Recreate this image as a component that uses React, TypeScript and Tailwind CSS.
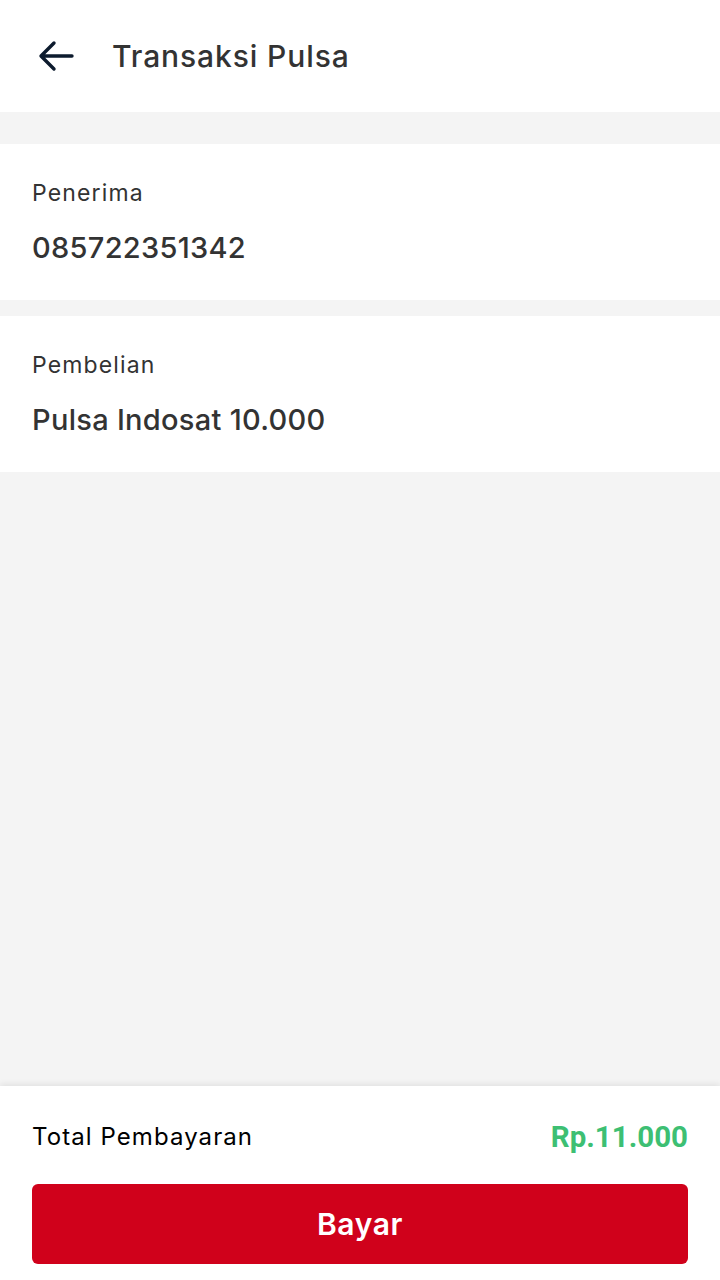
import React from "react";

const font = { fontFamily: "Inter, 'Noto Sans', sans-serif" };

const InfoCard: React.FC<{ label: string; value: string }> = ({ label, value }) => (
    <div className="bg-white px-8 h-[156px] flex flex-col justify-center">
        <p className="text-[23px] leading-none tracking-[0.05em] text-[#333333] mb-[28px]">{label}</p>
        <p className="text-[29px] leading-none font-medium tracking-[0.01em] text-[#333333]">{value}</p>
    </div>
);

export default function App() {
    return (
        <div className="w-[720px] h-[1280px] bg-[#f4f4f4] flex flex-col" style={font}>
            <header className="bg-white h-[112px] flex items-center shrink-0">
                <button className="ml-[38px] w-9 h-9 flex items-center justify-center">
                    <svg width="36" height="32" viewBox="0 0 36 32" fill="none">
                        <path
                            d="M34 16H4M16 3L3 16l13 13"
                            stroke="#0d1b2e"
                            strokeWidth="3.4"
                            strokeLinecap="round"
                            strokeLinejoin="round"
                        />
                    </svg>
                </button>
                <h1 className="ml-[38px] text-[30px] font-medium tracking-[0.03em] text-[#333333]">Transaksi Pulsa</h1>
            </header>

            <div className="mt-8 flex flex-col gap-4">
                <InfoCard label="Penerima" value="085722351342" />
                <InfoCard label="Pembelian" value="Pulsa Indosat 10.000" />
            </div>

            <div className="flex-1" />

            <footer className="bg-white h-[194px] px-8 pt-[34px] shadow-[0_-2px_6px_rgba(0,0,0,0.08)] shrink-0">
                <div className="flex items-center justify-between h-[34px]">
                    <span className="text-[24px] tracking-[0.045em] text-black">Total Pembayaran</span>
                    <span
                        className="text-[29.5px] font-bold text-[#3dbf73]"
                        style={{ fontFamily: "Roboto, sans-serif" }}
                    >
                        Rp.11.000
                    </span>
                </div>
                <button className="mt-[30px] w-full h-[80px] rounded-md bg-[#d0011b] text-white text-[30px] font-semibold tracking-[0.02em]">
                    Bayar
                </button>
            </footer>
        </div>
    );
}
